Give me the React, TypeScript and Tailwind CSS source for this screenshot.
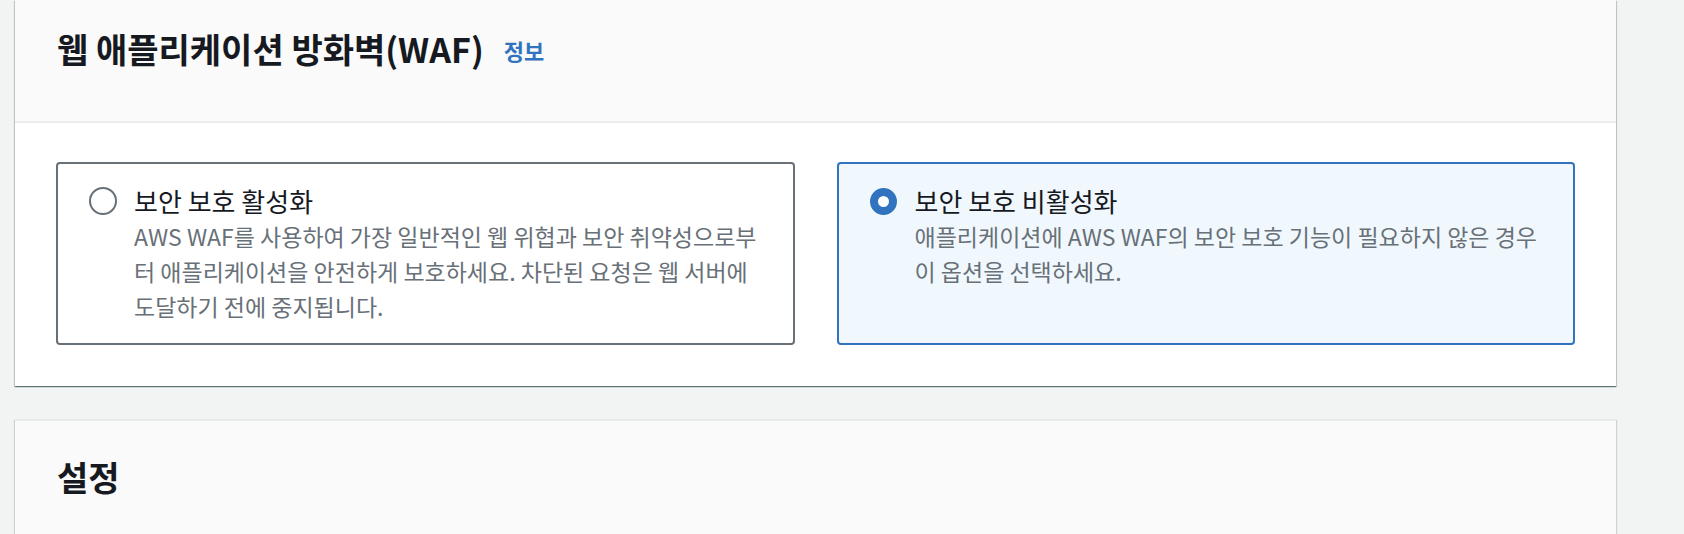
import React from "react";

const font = { fontFamily: '"Noto Sans CJK KR", "Noto Sans", sans-serif' };

function Radio({ checked }: { checked: boolean }) {
    return checked ? (
        <span className="block h-[27px] w-[27px] shrink-0 rounded-full border-[8px] border-[#3173be] bg-white" />
    ) : (
        <span className="block h-[28px] w-[28px] shrink-0 rounded-full border-2 border-[#687078] bg-white" />
    );
}

function Tile({
    checked,
    label,
    lines,
}: {
    checked: boolean;
    label: string;
    lines: string[];
}) {
    return (
        <div
            className={
                checked
                    ? "flex h-[183px] flex-1 gap-[17px] rounded-[4px] border-2 border-[#3173be] bg-[#f1f8fd] pl-[31px] pt-[21px]"
                    : "flex h-[183px] flex-1 gap-[17px] rounded-[4px] border-2 border-[#687078] bg-white pl-[31px] pt-[21px]"
            }
        >
            <div className="flex h-[32px] w-[28px] items-center">
                <Radio checked={checked} />
            </div>
            <div className="flex flex-col">
                <div className="text-[26px] leading-[32px] text-[#16191f]">{label}</div>
                <p className="mt-[2px] text-[23px] leading-[35px] text-[#687078]">
                    {lines.map((l, i) => (
                        <React.Fragment key={i}>
                            {l}
                            {i < lines.length - 1 && <br />}
                        </React.Fragment>
                    ))}
                </p>
            </div>
        </div>
    );
}

export default function App() {
    return (
        <div
            className="flex h-[534px] w-full flex-col gap-[34px] overflow-hidden bg-[#f2f3f3] pl-[15px] pr-[68px]"
            style={font}
        >
            {/* WAF panel */}
            <section className="shrink-0 bg-white shadow-[0_1px_1px_0_rgba(0,28,36,0.45),1px_1px_1px_0_rgba(0,28,36,0.15),-1px_1px_1px_0_rgba(0,28,36,0.15)]">
                <header className="flex h-[123px] items-start gap-[20px] border-b-2 border-[#eaeded] bg-[#fafafa] pl-[42px] pt-[29px]">
                    <h2 className="text-[34px] font-bold leading-[40px] text-[#16191f]">
                        웹 애플리케이션 방화벽(WAF)
                    </h2>
                    <a className="mt-[6px] text-[22px] font-bold leading-[30px] text-[#3173be]">정보</a>
                </header>
                <div className="flex gap-[42px] px-[41px] pb-[41px] pt-[39px]">
                    <Tile
                        checked={false}
                        label="보안 보호 활성화"
                        lines={[
                            "AWS WAF를 사용하여 가장 일반적인 웹 위협과 보안 취약성으로부",
                            "터 애플리케이션을 안전하게 보호하세요. 차단된 요청은 웹 서버에",
                            "도달하기 전에 중지됩니다.",
                        ]}
                    />
                    <Tile
                        checked={true}
                        label="보안 보호 비활성화"
                        lines={[
                            "애플리케이션에 AWS WAF의 보안 보호 기능이 필요하지 않은 경우",
                            "이 옵션을 선택하세요.",
                        ]}
                    />
                </div>
            </section>

            {/* Settings panel */}
            <section className="h-[200px] shrink-0 border-t border-[#eaeded] bg-[#fafafa] shadow-[1px_0_1px_0_rgba(0,28,36,0.15),-1px_0_1px_0_rgba(0,28,36,0.15)]">
                <h2 className="pl-[42px] pt-[36px] text-[34px] font-bold leading-[40px] text-[#16191f]">설정</h2>
            </section>
        </div>
    );
}
